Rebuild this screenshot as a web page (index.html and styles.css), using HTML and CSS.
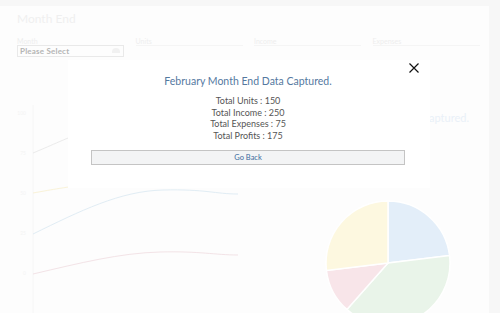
FILE: index.html
```html
<!DOCTYPE html>
<html lang="en">
<head>
  <meta charset="UTF-8">
  <meta name="viewport" content="width=device-width, initial-scale=1.0">
  <title>Month End</title>
  <link rel="stylesheet" href="styles.css">
</head>
<body>
  <div class="page">
    <h2 class="page-title">Month End</h2>
    <div class="form-row">
      <div class="field">
        <label>Month</label>
        <div class="select">Please Select <span class="select-icon"></span></div>
      </div>
      <div class="field">
        <label>Units</label>
        <div class="input"></div>
      </div>
      <div class="field">
        <label>Income</label>
        <div class="input"></div>
      </div>
      <div class="field">
        <label>Expenses</label>
        <div class="input"></div>
      </div>
    </div>

    <div class="charts">
      <div class="chart-panel">
        <svg class="line-chart" width="250" height="213" viewBox="0 100 250 213">
          <line x1="33" y1="104" x2="33" y2="313" stroke="#f4f4f4" stroke-width="1"/>
          <g class="axis-labels">
            <text x="26" y="114">100</text>
            <text x="26" y="154">75</text>
            <text x="26" y="194">50</text>
            <text x="26" y="234">25</text>
            <text x="26" y="274">0</text>
          </g>
          <path d="M33 152 C 50 145, 60 140, 90 128 S 150 110, 238 112" stroke="#e8e8e8" fill="none"/>
          <path d="M33 192 C 50 189, 60 187, 90 183 S 150 176, 238 178" stroke="#f9f1d2" fill="none"/>
          <path d="M33 233 C 80 210, 120 190, 163 189 S 215 193, 238 193" stroke="#dceaf3" fill="none"/>
          <path d="M33 273 C 80 262, 120 252, 160 251 S 215 254, 238 254" stroke="#f1dfe3" fill="none"/>
        </svg>
      </div>
      <div class="chart-panel pie-panel">
        <div class="pie-title">Month End Data Captured.</div>
        <svg class="pie-chart" width="239" height="189" viewBox="250 124 239 189">
          <g stroke="#fff" stroke-width="1.5">
            <path d="M388 262 L388 200 A62 62 0 0 1 449.55 254.53 Z" fill="#deecf8"/>
            <path d="M388 262 L449.55 254.53 A62 62 0 0 1 346.89 308.41 Z" fill="#e6f3e5"/>
            <path d="M388 262 L346.89 308.41 A62 62 0 0 1 326.45 269.47 Z" fill="#f7e1e5"/>
            <path d="M388 262 L326.45 269.47 A62 62 0 0 1 388 200 Z" fill="#fdf7db"/>
          </g>
        </svg>
      </div>
    </div>
  </div>

  <div class="backdrop"></div>

  <div class="modal">
    <button class="modal-close" aria-label="Close">
      <svg width="10" height="10" viewBox="0 0 10 10">
        <path d="M0.5 0.5 L9.5 9.5 M9.5 0.5 L0.5 9.5" stroke="#111" stroke-width="1.2" fill="none"/>
      </svg>
    </button>
    <h3 class="modal-title">February Month End Data Captured.</h3>
    <div class="totals">
      <div>Total Units : 150</div>
      <div>Total Income : 250</div>
      <div>Total Expenses : 75</div>
      <div>Total Profits : 175</div>
    </div>
    <button class="back-button">Go Back</button>
  </div>
</body>
</html>
```

FILE: styles.css
```css
* {
  box-sizing: border-box;
  margin: 0;
  padding: 0;
}

body {
  font-family: 'Lato', 'Liberation Sans', sans-serif;
  background-color: #f6f6f6;
  width: 500px;
  height: 313px;
  overflow: hidden;
  position: relative;
}

.page {
  margin-top: 6px;
  width: 489px;
  height: 307px;
  background-color: #fdfdfd;
  padding-top: 6px;
}

.page-title {
  font-size: 12px;
  font-weight: normal;
  line-height: 14px;
  color: #ededed;
  padding-left: 17px;
}

.form-row {
  display: grid;
  grid-template-columns: repeat(4, 107px);
  column-gap: 11.5px;
  padding-left: 17px;
  margin-top: 11px;
}

.field label {
  display: block;
  font-size: 7px;
  line-height: 8px;
  color: #ebebeb;
}

.select {
  position: relative;
  height: 12px;
  border: 1px solid #e6e6e6;
  font-size: 8px;
  font-weight: bold;
  line-height: 10px;
  color: #a8a8a8;
  padding-left: 2px;
  letter-spacing: 0.2px;
}

.select-icon {
  position: absolute;
  right: 3px;
  top: 2px;
  width: 8px;
  height: 5px;
  border-radius: 4px 4px 0 0;
  background-color: #efefef;
}

.input {
  height: 12px;
  border-top: 1px solid #f4f4f4;
}

.charts {
  display: grid;
  grid-template-columns: 250px 239px;
  margin-top: 44px;
}

.axis-labels text {
  font-size: 5px;
  fill: #f2f2f2;
  text-anchor: end;
}

.pie-panel {
  padding-top: 10px;
}

.pie-title {
  font-size: 11px;
  line-height: 14px;
  color: #e6eef7;
  text-align: right;
  padding-right: 20px;
}

.backdrop {
  position: absolute;
  top: 0;
  left: 0;
  width: 100%;
  height: 100%;
  background-color: rgba(255, 255, 255, 0.15);
}

.modal {
  position: absolute;
  left: 68px;
  top: 60px;
  width: 362px;
  height: 128px;
  background-color: #fff;
  padding: 14px 25px 0 23px;
  text-align: center;
}

.modal-close {
  position: absolute;
  top: 3px;
  right: 11px;
  width: 10px;
  height: 10px;
  border: none;
  background: none;
  display: flex;
}

.modal-title {
  font-size: 10.5px;
  font-weight: normal;
  line-height: 14px;
  color: #55799f;
}

.totals {
  margin-top: 7px;
  font-size: 9px;
  line-height: 11.5px;
  color: #555;
}

.back-button {
  display: block;
  width: 100%;
  height: 15px;
  margin-top: 9px;
  border: 1px solid #c4c4c4;
  background-color: #f3f4f5;
  font-family: 'Lato', 'Liberation Sans', sans-serif;
  font-size: 7.5px;
  color: #3d6c9e;
}
```
